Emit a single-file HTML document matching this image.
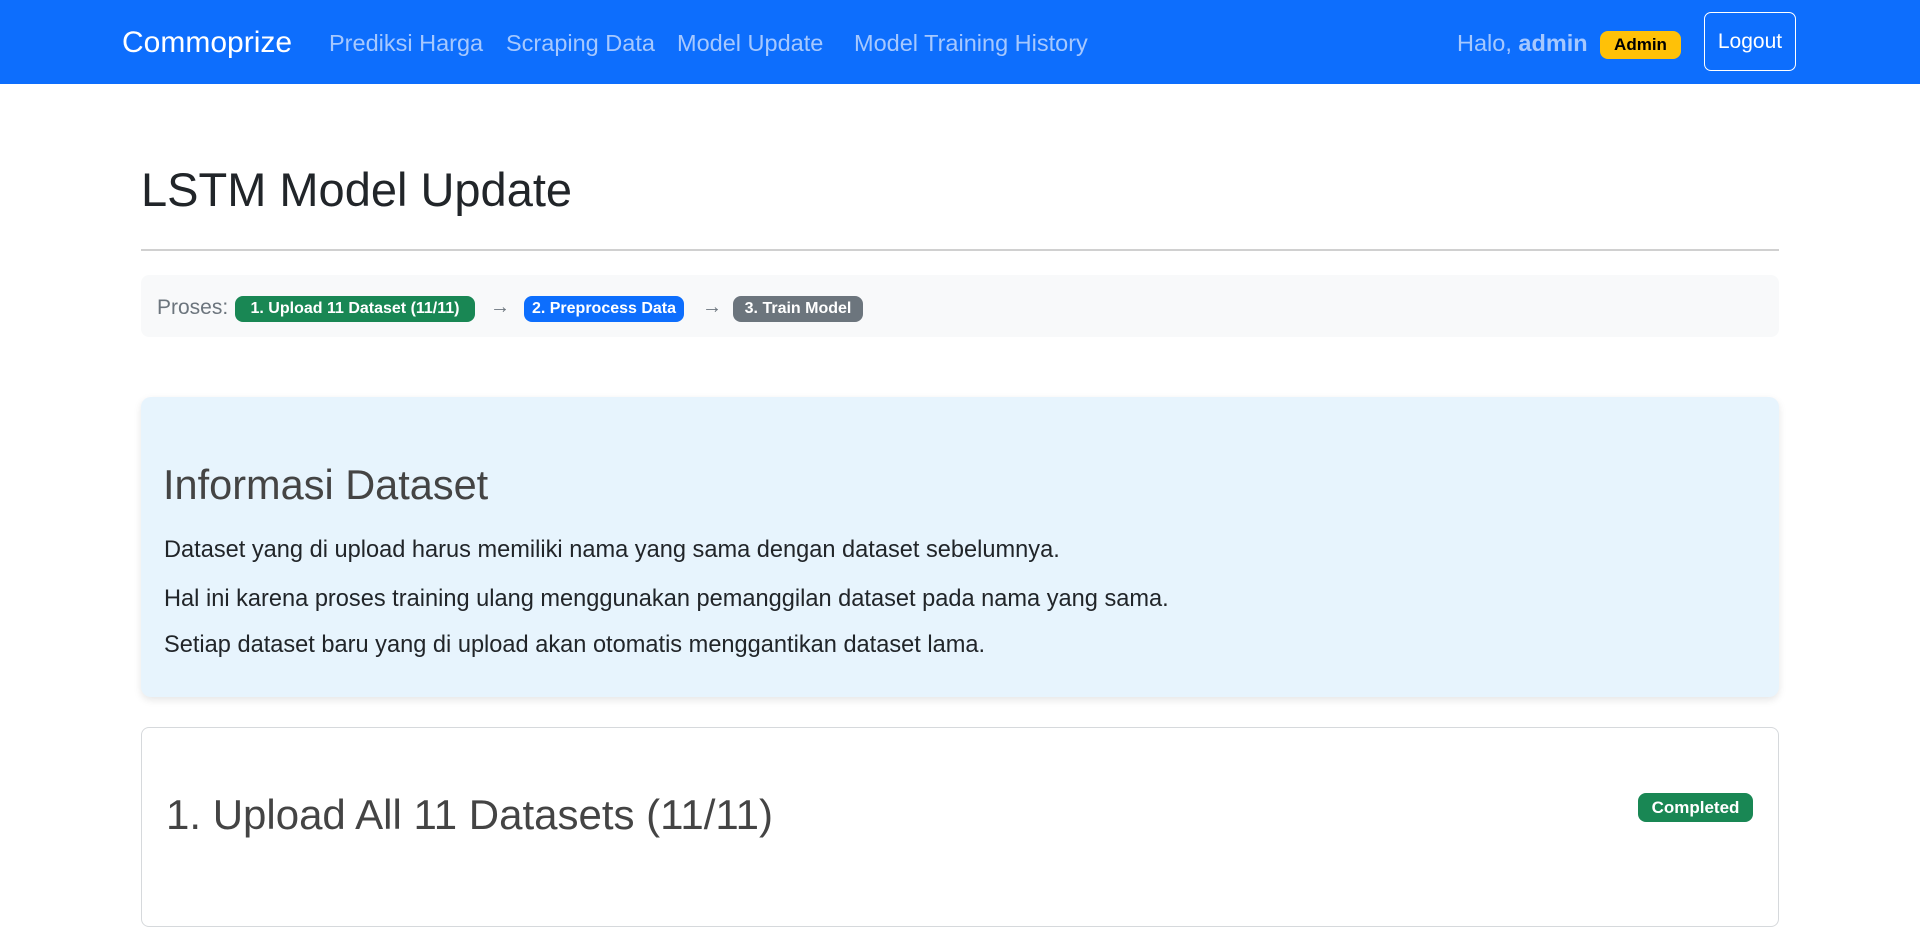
<!DOCTYPE html>
<html><head><meta charset="utf-8">
<style>
*{box-sizing:border-box;margin:0;padding:0}
body{width:1920px;height:880px;overflow:hidden;background:#fff;font-family:"Liberation Sans",sans-serif;position:relative;color:#212529}
.a{position:absolute;white-space:nowrap}
.nav{position:absolute;left:0;top:0;width:1920px;height:84px;background:#0d6efd}
.link{color:#a6c8fe;font-size:23.5px;top:30px}
.badge{position:absolute;border-radius:8px;color:#fff;font-weight:bold;font-size:16px;display:flex;align-items:center;justify-content:center}
</style></head><body>
<div class="nav">
  <div class="a" style="left:122px;top:26px;font-size:30px;color:#fff">Commoprize</div>
  <div class="a link" style="left:329px">Prediksi Harga</div>
  <div class="a link" style="left:506px">Scraping Data</div>
  <div class="a link" style="left:677px">Model Update</div>
  <div class="a link" style="left:854px">Model Training History</div>
  <div class="a link" style="left:1457px">Halo, <b>admin</b></div>
  <div class="badge" style="left:1600px;top:31px;width:81px;height:28px;background:#ffc107;color:#000;font-size:17px">Admin</div>
  <div class="a" style="left:1704px;top:12px;width:92px;height:59px;border:1px solid #fff;border-radius:7px;color:#fff;font-size:21px;display:flex;align-items:center;justify-content:center">Logout</div>
</div>
<div class="a" style="left:141px;top:160px;font-size:47px;line-height:60px">LSTM Model Update</div>
<div class="a" style="left:141px;top:249px;width:1638px;height:2px;background:#d0d0d0"></div>
<div class="a" style="left:141px;top:275px;width:1638px;height:62px;background:#f8f9fa;border-radius:8px"></div>
<div class="a" style="left:157px;top:296px;font-size:21px;color:#6c757d">Proses:</div>
<div class="badge" style="left:235px;top:296px;width:240px;height:26px;background:#198754">1. Upload 11 Dataset (11/11)</div>
<div class="a" style="left:490px;top:296px;font-size:20px;color:#6c757d">→</div>
<div class="badge" style="left:524px;top:296px;width:160px;height:26px;background:#0d6efd">2. Preprocess Data</div>
<div class="a" style="left:702px;top:296px;font-size:20px;color:#6c757d">→</div>
<div class="badge" style="left:733px;top:296px;width:130px;height:26px;background:#6c757d">3. Train Model</div>
<div class="a" style="left:141px;top:397px;width:1638px;height:300px;background:#e7f4fd;border-radius:10px;box-shadow:0 3px 8px rgba(0,0,0,.1)"></div>
<div class="a" style="left:163px;top:461px;font-size:41.5px;color:#444">Informasi Dataset</div>
<div class="a" style="left:164px;top:537px;font-size:23.6px">Dataset yang di upload harus memiliki nama yang sama dengan dataset sebelumnya.</div>
<div class="a" style="left:164px;top:586px;font-size:23.6px">Hal ini karena proses training ulang menggunakan pemanggilan dataset pada nama yang sama.</div>
<div class="a" style="left:164px;top:632px;font-size:23.6px">Setiap dataset baru yang di upload akan otomatis menggantikan dataset lama.</div>
<div class="a" style="left:141px;top:727px;width:1638px;height:200px;border:1px solid #d6d9dc;border-radius:8px"></div>
<div class="a" style="left:166px;top:791px;font-size:42px;color:#444">1. Upload All 11 Datasets (11/11)</div>
<div class="badge" style="left:1638px;top:793px;width:115px;height:29px;background:#198754;font-size:17px">Completed</div>
</body></html>
